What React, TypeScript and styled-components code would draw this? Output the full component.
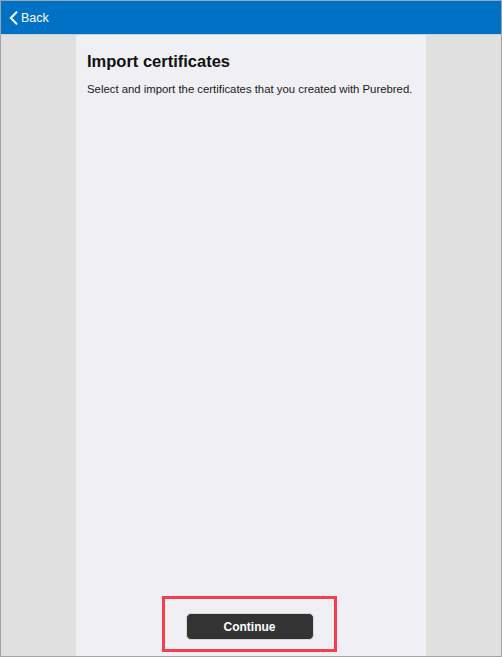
import React from "react";
import styled, { createGlobalStyle } from "styled-components";

const Global = createGlobalStyle`
  html, body { margin: 0; padding: 0; }
  body { font-family: "Liberation Sans", Arial, sans-serif; background: #ffffff; }
`;

const Frame = styled.div`
  box-sizing: border-box;
  width: 502px;
  height: 657px;
  border: 1px solid #a3a3a3;
  display: flex;
  flex-direction: column;
  background: #e0e0e0;
`;

const Header = styled.header`
  height: 33px;
  background: #0072c6;
  display: flex;
  align-items: center;
  padding-left: 8px;
  border-bottom: 1px solid #c8d0d8;
  flex-shrink: 0;
`;

const BackButton = styled.button`
  display: flex;
  align-items: center;
  gap: 3px;
  background: none;
  border: none;
  padding: 0;
  color: #ffffff;
  font-family: "Liberation Sans", Arial, sans-serif;
  font-size: 12.5px;
  cursor: pointer;
`;

const Body = styled.div`
  flex: 1;
  display: grid;
  grid-template-columns: 75px 350px 1fr;
  min-height: 0;
`;

const Side = styled.div`
  background: #e0e0e0;
`;

const Panel = styled.main`
  background: #efeff4;
  display: flex;
  flex-direction: column;
  padding: 16px 11px 0 11px;
`;

const Title = styled.h1`
  margin: 0;
  font-family: "Liberation Sans", Arial, sans-serif;
  font-weight: 700;
  font-size: 16.5px;
  color: #111111;
  line-height: 20px;
`;

const Text = styled.p`
  margin: 11px 0 0 0;
  font-family: "Liberation Sans", Arial, sans-serif;
  font-size: 11.35px;
  line-height: 14px;
  color: #1a1a1a;
`;

const Spacer = styled.div`
  flex: 1;
`;

const Highlight = styled.div`
  align-self: center;
  box-sizing: border-box;
  width: 175px;
  height: 56px;
  border: 3px solid #f2404f;
  display: flex;
  align-items: center;
  justify-content: center;
  padding-top: 5px;
  margin-bottom: 4px;
  margin-right: 3px;
`;

const ContinueButton = styled.button`
  box-sizing: border-box;
  width: 128px;
  height: 27px;
  background: #333333;
  border: 1px solid #d8d8d8;
  border-radius: 5px;
  color: #ffffff;
  font-family: "Liberation Sans", Arial, sans-serif;
  font-size: 12px;
  font-weight: 700;
  cursor: pointer;
`;

export default function App() {
  return (
    <>
      <Global />
      <Frame>
        <Header>
          <BackButton>
            <svg width="9" height="14" viewBox="0 0 9 14" fill="none">
              <path d="M7.5 1.2 L1.8 7 L7.5 12.8" stroke="#ffffff" strokeWidth="2" strokeLinecap="round" strokeLinejoin="round" />
            </svg>
            Back
          </BackButton>
        </Header>
        <Body>
          <Side />
          <Panel>
            <Title>Import certificates</Title>
            <Text>Select and import the certificates that you created with Purebred.</Text>
            <Spacer />
            <Highlight>
              <ContinueButton>Continue</ContinueButton>
            </Highlight>
          </Panel>
          <Side />
        </Body>
      </Frame>
    </>
  );
}
